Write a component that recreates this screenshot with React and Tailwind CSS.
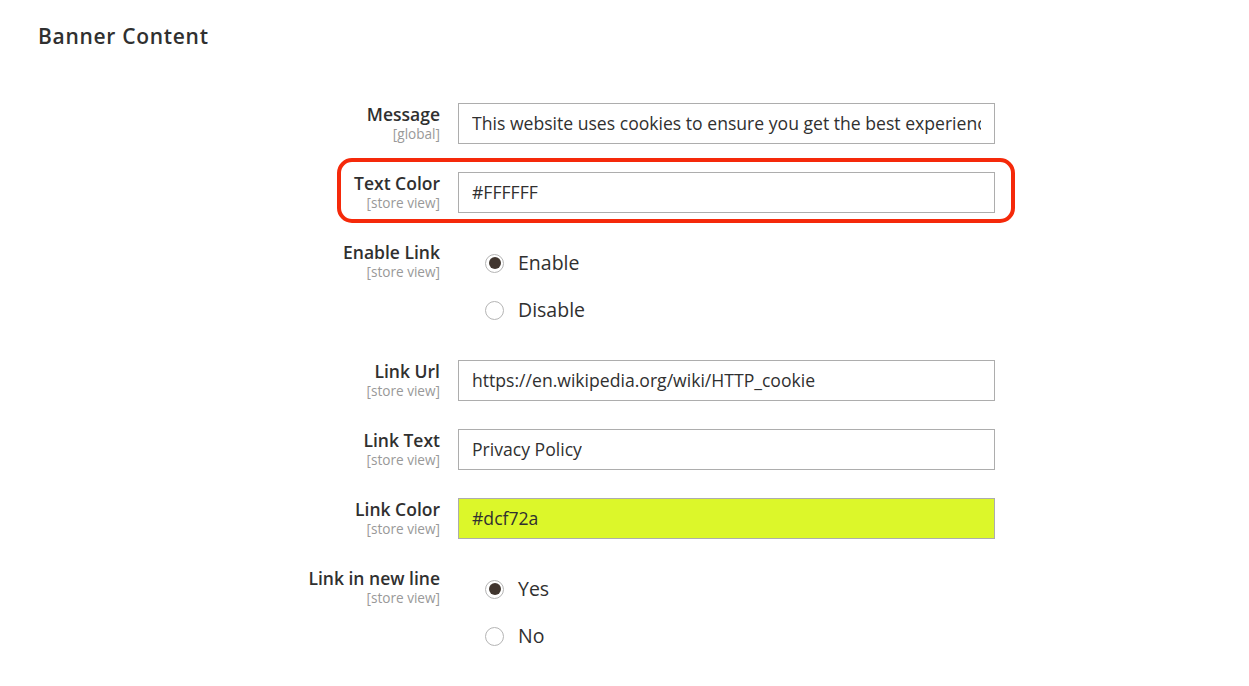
import React from "react";

const FONT = "font-['Open_Sans','Liberation_Sans',sans-serif]";

function Label({ title, scope }) {
  return (
    <div className="w-[440px] shrink-0 text-right">
      <div className="text-[17.5px] font-semibold leading-[22px] text-[#303030]">{title}</div>
      <div className="text-[13.6px] leading-[17px] text-[#999]">[{scope}]</div>
    </div>
  );
}

function TextField({ value, className = "bg-white" }) {
  return (
    <div
      className={`ml-[18px] flex h-[41px] w-[537px] items-center overflow-hidden whitespace-nowrap border border-[#adadad] pl-[13px] pr-[13px] text-[17.6px] text-[#303030] ${className}`}
    >
      <span className="block min-w-0 overflow-hidden">{value}</span>
    </div>
  );
}

function Radio({ checked, label }) {
  return (
    <div className="flex h-[26px] items-center">
      <span className="flex h-[19px] w-[19px] items-center justify-center rounded-full border border-[#b5b5b5] bg-white">
        {checked && <span className="h-[12px] w-[12px] rounded-full bg-[#41362f]" />}
      </span>
      <span className="ml-[14px] text-[19.5px] leading-[26px] text-[#303030]">{label}</span>
    </div>
  );
}

function RadioGroup({ options }) {
  return (
    <div className="ml-[45px] flex flex-col gap-[21px] pb-[9px] pt-[9px]">
      {options.map((o) => (
        <Radio key={o.label} checked={o.checked} label={o.label} />
      ))}
    </div>
  );
}

export default function App() {
  return (
    <div className={`min-h-[686px] w-full bg-white ${FONT}`}>
      <h2 className="pl-[38px] pt-[22px] text-[21px] font-semibold leading-[28px] tracking-[0.7px] text-[#303030]">
        Banner Content
      </h2>

      <div className="mt-[53px] flex flex-col gap-[28px]">
        <div className="flex">
          <Label title="Message" scope="global" />
          <TextField value="This website uses cookies to ensure you get the best experience on our website." />
        </div>

        <div className="relative flex">
          <Label title="Text Color" scope="store view" />
          <TextField value="#FFFFFF" />
          <div className="pointer-events-none absolute left-[337px] top-[-14px] h-[65px] w-[678px] rounded-[15px] border-[4px] border-[#f5290a]" />
        </div>

        <div className="flex">
          <Label title="Enable Link" scope="store view" />
          <RadioGroup
            options={[
              { label: "Enable", checked: true },
              { label: "Disable", checked: false },
            ]}
          />
        </div>

        <div className="flex">
          <Label title="Link Url" scope="store view" />
          <TextField value="https://en.wikipedia.org/wiki/HTTP_cookie" />
        </div>

        <div className="flex">
          <Label title="Link Text" scope="store view" />
          <TextField value="Privacy Policy" />
        </div>

        <div className="flex">
          <Label title="Link Color" scope="store view" />
          <TextField value="#dcf72a" className="bg-[#dcf72a]" />
        </div>

        <div className="flex">
          <Label title="Link in new line" scope="store view" />
          <RadioGroup
            options={[
              { label: "Yes", checked: true },
              { label: "No", checked: false },
            ]}
          />
        </div>
      </div>
    </div>
  );
}
